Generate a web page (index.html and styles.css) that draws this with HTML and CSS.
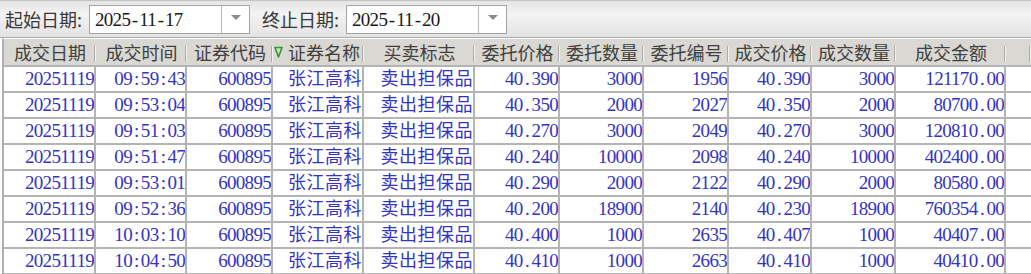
FILE: index.html
```html
<!DOCTYPE html>
<html lang="zh-CN">
<head>
<meta charset="utf-8">
<title>成交查询</title>
<link rel="stylesheet" href="styles.css">
</head>
<body>
<div class="toolbar">
  <span class="lbl">起始日期:</span>
  <div class="combo"><span class="val">2025<span class="p">-</span>11<span class="p">-</span>17</span><span class="btn"><i class="arrow"></i></span></div>
  <span class="lbl lbl2">终止日期:</span>
  <div class="combo"><span class="val">2025<span class="p">-</span>11<span class="p">-</span>20</span><span class="btn"><i class="arrow"></i></span></div>
</div>
<div class="grid">
  <div class="row head">
    <div class="c">成交日期</div>
    <div class="c">成交时间</div>
    <div class="c">证券代码</div>
    <div class="c sort"><svg class="tri" width="9" height="12" viewBox="0 0 9 12"><path d="M1 1.5 H8 L4.5 11 Z" fill="none" stroke="#2f9a2f" stroke-width="1.6" stroke-linejoin="round"/></svg><span>证券名称</span></div>
    <div class="c">买卖标志</div>
    <div class="c">委托价格</div>
    <div class="c">委托数量</div>
    <div class="c">委托编号</div>
    <div class="c">成交价格</div>
    <div class="c">成交数量</div>
    <div class="c">成交金额</div>
    <div class="c f"></div>
  </div>
  <div class="body">
    <div class="row">
      <div class="c">20251119</div><div class="c">09<span class="p">:</span>59<span class="p">:</span>43</div><div class="c">600895</div><div class="c t">张江高科</div><div class="c t">卖出担保品</div><div class="c">40<span class="p">.</span>390</div><div class="c">3000</div><div class="c">1956</div><div class="c">40<span class="p">.</span>390</div><div class="c">3000</div><div class="c">121170<span class="p">.</span>00</div><div class="c f"></div>
    </div>
    <div class="row">
      <div class="c">20251119</div><div class="c">09<span class="p">:</span>53<span class="p">:</span>04</div><div class="c">600895</div><div class="c t">张江高科</div><div class="c t">卖出担保品</div><div class="c">40<span class="p">.</span>350</div><div class="c">2000</div><div class="c">2027</div><div class="c">40<span class="p">.</span>350</div><div class="c">2000</div><div class="c">80700<span class="p">.</span>00</div><div class="c f"></div>
    </div>
    <div class="row">
      <div class="c">20251119</div><div class="c">09<span class="p">:</span>51<span class="p">:</span>03</div><div class="c">600895</div><div class="c t">张江高科</div><div class="c t">卖出担保品</div><div class="c">40<span class="p">.</span>270</div><div class="c">3000</div><div class="c">2049</div><div class="c">40<span class="p">.</span>270</div><div class="c">3000</div><div class="c">120810<span class="p">.</span>00</div><div class="c f"></div>
    </div>
    <div class="row">
      <div class="c">20251119</div><div class="c">09<span class="p">:</span>51<span class="p">:</span>47</div><div class="c">600895</div><div class="c t">张江高科</div><div class="c t">卖出担保品</div><div class="c">40<span class="p">.</span>240</div><div class="c">10000</div><div class="c">2098</div><div class="c">40<span class="p">.</span>240</div><div class="c">10000</div><div class="c">402400<span class="p">.</span>00</div><div class="c f"></div>
    </div>
    <div class="row">
      <div class="c">20251119</div><div class="c">09<span class="p">:</span>53<span class="p">:</span>01</div><div class="c">600895</div><div class="c t">张江高科</div><div class="c t">卖出担保品</div><div class="c">40<span class="p">.</span>290</div><div class="c">2000</div><div class="c">2122</div><div class="c">40<span class="p">.</span>290</div><div class="c">2000</div><div class="c">80580<span class="p">.</span>00</div><div class="c f"></div>
    </div>
    <div class="row">
      <div class="c">20251119</div><div class="c">09<span class="p">:</span>52<span class="p">:</span>36</div><div class="c">600895</div><div class="c t">张江高科</div><div class="c t">卖出担保品</div><div class="c">40<span class="p">.</span>200</div><div class="c">18900</div><div class="c">2140</div><div class="c">40<span class="p">.</span>230</div><div class="c">18900</div><div class="c">760354<span class="p">.</span>00</div><div class="c f"></div>
    </div>
    <div class="row">
      <div class="c">20251119</div><div class="c">10<span class="p">:</span>03<span class="p">:</span>10</div><div class="c">600895</div><div class="c t">张江高科</div><div class="c t">卖出担保品</div><div class="c">40<span class="p">.</span>400</div><div class="c">1000</div><div class="c">2635</div><div class="c">40<span class="p">.</span>407</div><div class="c">1000</div><div class="c">40407<span class="p">.</span>00</div><div class="c f"></div>
    </div>
    <div class="row">
      <div class="c">20251119</div><div class="c">10<span class="p">:</span>04<span class="p">:</span>50</div><div class="c">600895</div><div class="c t">张江高科</div><div class="c t">卖出担保品</div><div class="c">40<span class="p">.</span>410</div><div class="c">1000</div><div class="c">2663</div><div class="c">40<span class="p">.</span>410</div><div class="c">1000</div><div class="c">40410<span class="p">.</span>00</div><div class="c f"></div>
    </div>
  </div>
</div>
</body>
</html>
```

FILE: styles.css
```css
* { box-sizing: border-box; }

body {
  margin: 0;
  background: #fff;
  font-family: "Noto Sans CJK SC", sans-serif;
  overflow: hidden;
}

.toolbar {
  height: 38px;
  display: flex;
  align-items: center;
  padding-left: 5px;
  background: linear-gradient(#e4e4e4, #f3f3f3 35%, #e3e3e3);
  border-top: 1px solid #c4c4c4;
  border-bottom: 1px solid #a9a9a9;
}

.lbl {
  width: 84px;
  font-size: 18px;
  line-height: 1;
  color: #383838;
}

.lbl2 { margin-left: 12px; }

.combo {
  width: 161px;
  height: 29px;
  display: flex;
  background: #fff;
  border: 1px solid #a3a3a3;
}

.val {
  flex: 1;
  padding-left: 5px;
  font: 19px/27px "Liberation Serif", serif;
  letter-spacing: -0.7px;
  color: #1a1a1a;
  white-space: nowrap;
}

.btn {
  width: 28px;
  display: flex;
  align-items: center;
  justify-content: center;
  border-left: 1px solid #b5b5b5;
}

.arrow {
  width: 0;
  height: 0;
  margin-top: -3px;
  border-left: 5px solid transparent;
  border-right: 5px solid transparent;
  border-top: 5px solid #8c8c8c;
}

.grid {
  margin-left: 2px;
  border-left: 2px solid #b0b0b0;
  border-top: 1px solid #fff;
}

.row {
  display: grid;
  grid-template-columns: 92px 91px 86px 91px 111px 85px 84px 85px 83px 84px 110px 1fr;
}

.head {
  height: 28px;
  background: #dad8d2;
  border-bottom: 2px solid #b4b4b4;
}

.head .c {
  position: relative;
  display: flex;
  align-items: center;
  justify-content: center;
  font-size: 18px;
  color: #404040;
  white-space: nowrap;
}

.head .c::after {
  content: "";
  position: absolute;
  right: 1px;
  top: 7px;
  width: 1px;
  height: 16px;
  background: #ababab;
  box-shadow: 1px 0 #f2f2f2;
}

.head .sort {
  justify-content: flex-start;
  gap: 5px;
  padding-left: 1px;
}

.tri { flex: none; }

.body .row { height: 26px; }

.body .c {
  border-right: 2px solid #b4b4b4;
  border-bottom: 2px solid #b4b4b4;
  text-align: right;
  font: 19px/24px "Liberation Serif", "Noto Sans CJK SC", serif;
  letter-spacing: -0.7px;
  color: #3434c4;
  white-space: nowrap;
  overflow: hidden;
}

.body .c.t {
  font-size: 18px;
  letter-spacing: 0.5px;
}

.body .c.f { border-right: none; }

.p {
  display: inline-block;
  width: 0.47em;
  text-align: center;
}
```
